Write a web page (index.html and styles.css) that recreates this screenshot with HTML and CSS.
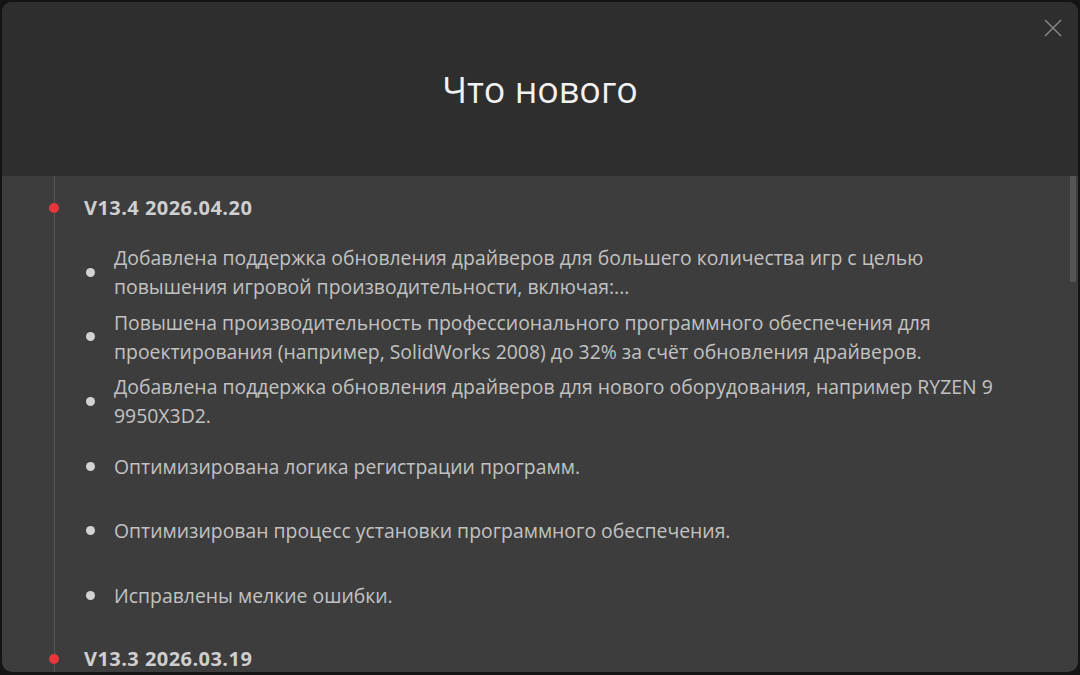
FILE: index.html
```html
<!DOCTYPE html>
<html lang="ru">
<head>
<meta charset="utf-8">
<link rel="stylesheet" href="styles.css">
</head>
<body>
<div class="window">
  <header class="header">
    <h1 class="title">Что нового</h1>
    <button class="close" aria-label="Закрыть">
      <svg width="18" height="18" viewBox="0 0 18 18"><path d="M1 1 L17 17 M17 1 L1 17" stroke="#8a8a8a" stroke-width="1.4" fill="none"/></svg>
    </button>
  </header>
  <main class="content">
    <div class="timeline">
      <section class="release">
        <h2 class="version"><span class="dot"></span>V13.4 2026.04.20</h2>
        <ul class="items">
          <li class="item"><span class="bullet"></span><p class="text">Добавлена поддержка обновления драйверов для большего количества игр с целью повышения игровой производительности, включая:...</p></li>
          <li class="item"><span class="bullet"></span><p class="text">Повышена производительность профессионального программного обеспечения для проектирования (например, SolidWorks 2008) до 32% за счёт обновления драйверов.</p></li>
          <li class="item"><span class="bullet"></span><p class="text">Добавлена поддержка обновления драйверов для нового оборудования, например RYZEN 9 9950X3D2.</p></li>
          <li class="item"><span class="bullet"></span><p class="text">Оптимизирована логика регистрации программ.</p></li>
          <li class="item"><span class="bullet"></span><p class="text">Оптимизирован процесс установки программного обеспечения.</p></li>
          <li class="item"><span class="bullet"></span><p class="text">Исправлены мелкие ошибки.</p></li>
        </ul>
      </section>
      <section class="release">
        <h2 class="version"><span class="dot"></span>V13.3 2026.03.19</h2>
      </section>
    </div>
    <div class="scrollbar"></div>
  </main>
</div>
</body>
</html>
```

FILE: styles.css
```css
* { box-sizing: border-box; }
html, body {
  margin: 0;
  height: 100%;
  background: #141414;
  overflow: hidden;
}
body {
  padding: 2px 2px 3px 2px;
  font-family: "Open Sans", "Noto Sans", sans-serif;
}
.window {
  height: 100%;
  border-radius: 10px;
  overflow: hidden;
  display: flex;
  flex-direction: column;
  background: #3d3d3d;
}
.header {
  position: relative;
  height: 174px;
  flex: none;
  background: #2e2e2e;
  display: flex;
  align-items: center;
  justify-content: center;
}
.title {
  margin: 0;
  font-weight: 400;
  font-size: 35.8px;
  color: #f2f2f2;
}
.close {
  position: absolute;
  top: 17px;
  right: 16px;
  width: 18px;
  height: 18px;
  padding: 0;
  border: 0;
  background: none;
  display: block;
}
.close svg { display: block; }
.content {
  flex: 1;
  position: relative;
  overflow: hidden;
}
.timeline {
  margin-left: 52px;
  border-left: 1px solid #575757;
  padding-top: 19px;
  min-height: 100%;
}
.release { position: relative; }
.version {
  position: relative;
  margin: 0;
  padding-left: 29px;
  font-size: 20px;
  font-weight: 700;
  letter-spacing: 0.45px;
  line-height: 26px;
  color: #cfcfcf;
}
.dot {
  position: absolute;
  left: -6px;
  top: 8px;
  width: 10px;
  height: 10px;
  border-radius: 50%;
  background: #e8363a;
}
.items {
  list-style: none;
  margin: 19px 0 18px 0;
  padding: 0;
}
.item {
  height: 64.6px;
  display: flex;
  align-items: center;
  padding-left: 31px;
}
.bullet {
  flex: none;
  width: 9px;
  height: 9px;
  border-radius: 50%;
  background: #d2d2d2;
  margin-right: 19px;
}
.text {
  margin: 0;
  width: 900px;
  font-size: 19.4px;
  line-height: 29px;
  color: #c2c2c2;
}
.scrollbar {
  position: absolute;
  top: 0;
  right: 2px;
  width: 6px;
  height: 106px;
  background: #555;
  border-radius: 1px;
}
```
